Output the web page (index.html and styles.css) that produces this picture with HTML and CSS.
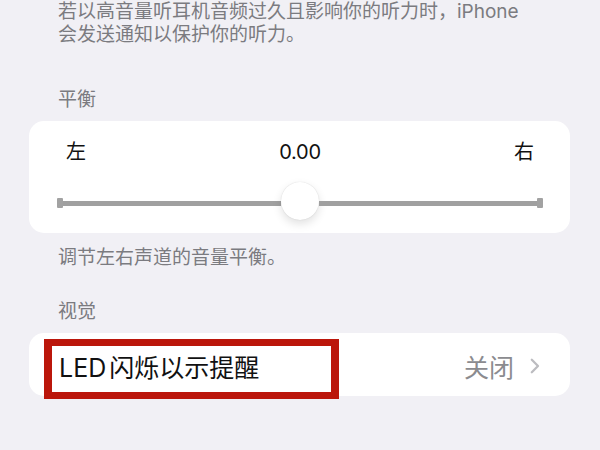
FILE: index.html
```html
<!DOCTYPE html>
<html lang="zh-CN">
<head>
<meta charset="utf-8">
<title>音频设置</title>
<link rel="stylesheet" href="styles.css">
</head>
<body>
<div class="page">
  <p class="note top-note">若以高音量听耳机音频过久且影响你的听力时，iPhone<br>会发送通知以保护你的听力。</p>

  <h2 class="section-title balance-title">平衡</h2>
  <div class="card balance-card">
    <div class="labels">
      <span class="side">左</span>
      <span class="value">0.00</span>
      <span class="side">右</span>
    </div>
    <div class="slider">
      <span class="cap"></span>
      <span class="track"></span>
      <span class="thumb"></span>
      <span class="track"></span>
      <span class="cap"></span>
    </div>
  </div>
  <p class="note caption">调节左右声道的音量平衡。</p>

  <h2 class="section-title visual-title">视觉</h2>
  <div class="card row-card">
    <span class="row-label">LED 闪烁以示提醒</span>
    <span class="row-value">关闭</span>
    <svg class="chevron" width="10" height="16" viewBox="0 0 10 16"><polyline points="1.8,1.8 8,8 1.8,14.2" fill="none" stroke="#bcbcc0" stroke-width="2.3" stroke-linecap="round" stroke-linejoin="round"/></svg>
    <span class="highlight"></span>
  </div>
</div>
</body>
</html>
```
FILE: styles.css
```css
html, body {
  margin: 0;
  padding: 0;
}
body {
  background: #f1f0f5;
  font-family: Inter, "Noto Sans CJK SC", sans-serif;
  width: 600px;
  height: 450px;
  overflow: hidden;
}
.page {
  padding: 0 30px 0 29px;
}
.note {
  margin: 0;
  padding-left: 29px;
  font-size: 19px;
  line-height: 23px;
  color: #7b7b80;
}
.top-note {
  margin-top: 0;
}
.section-title {
  margin: 0;
  padding-left: 29px;
  font-size: 19px;
  line-height: 23px;
  font-weight: 400;
  color: #7b7b80;
}
.balance-title {
  margin-top: 42px;
}
.card {
  background: #ffffff;
  border-radius: 15px;
}
.balance-card {
  margin-top: 10px;
  height: 112px;
  box-sizing: border-box;
  padding: 18px 27px 0 28px;
}
.labels {
  display: flex;
  justify-content: space-between;
  padding: 0 9px 0 9px;
  font-size: 20px;
  line-height: 26px;
  color: #111;
}
.value {
  font-size: 20px;
  letter-spacing: -0.3px;
}
.slider {
  margin-top: 17px;
  display: flex;
  align-items: center;
  height: 38px;
}
.cap {
  width: 6px;
  height: 10px;
  background: #a2a2a2;
  border-radius: 1px;
  margin-top: 4px;
}
.track {
  flex: 1;
  height: 5px;
  background: #a0a0a0;
  margin-top: 4px;
}
.thumb {
  width: 38px;
  height: 38px;
  border-radius: 50%;
  background: #fff;
  box-shadow: 0 4px 10px rgba(0, 0, 0, 0.12), 0 0 1px rgba(0, 0, 0, 0.18);
}
.caption {
  margin-top: 13px;
}
.visual-title {
  margin-top: 31px;
}
.row-card {
  position: relative;
  margin-top: 10px;
  height: 63px;
  display: flex;
  align-items: center;
  padding: 0 30px 0 30px;
}
.row-label {
  flex: 1;
  font-size: 25px;
  color: #111;
  margin-top: 2px;
  word-spacing: -4px;
}
.row-value {
  font-size: 25px;
  color: #8b8b8f;
  margin-right: 16px;
  margin-top: 2px;
}
.chevron {
  display: block;
  margin-top: 2px;
}
.highlight {
  position: absolute;
  left: 15px;
  top: 6px;
  width: 295px;
  height: 60px;
  box-sizing: border-box;
  border-style: solid;
  border-color: #bb160b;
  border-width: 7px 8px;
}
```
